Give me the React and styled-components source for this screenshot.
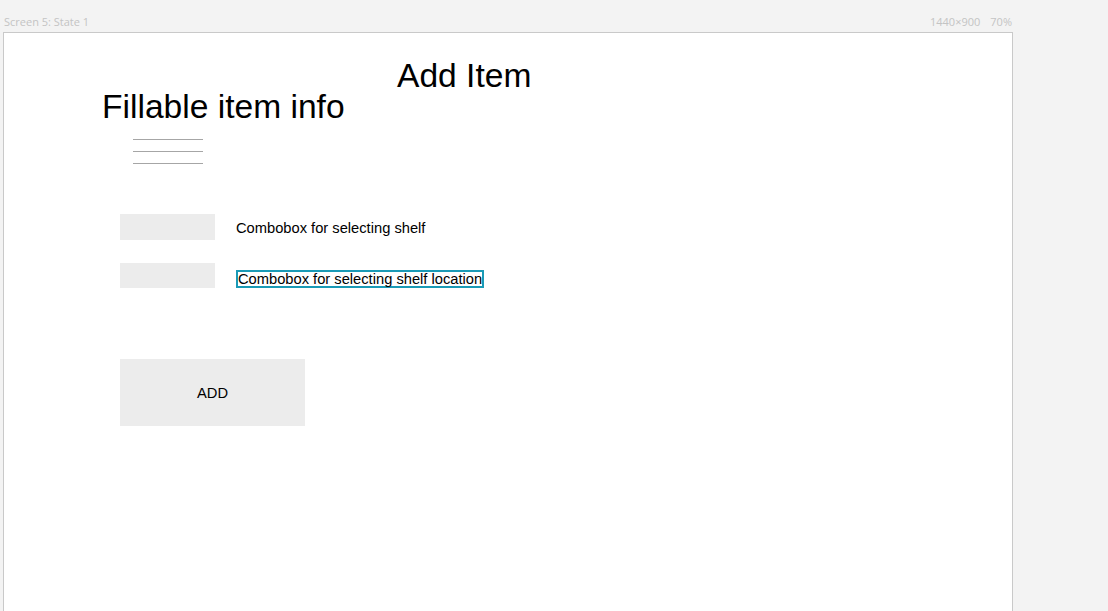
import React from 'react';
import styled, { createGlobalStyle } from 'styled-components';

const GlobalStyle = createGlobalStyle`
  html, body {
    margin: 0;
    padding: 0;
    background: #f3f3f3;
    overflow: hidden;
  }
  #root {
    height: 100vh;
  }
`;

const Page = styled.div`
  height: 100vh;
  display: flex;
  flex-direction: column;
`;

const TopBar = styled.div`
  width: 1010px;
  height: 32px;
  margin-left: 3px;
  box-sizing: border-box;
  padding: 15px 1px 0 1px;
  display: flex;
  justify-content: space-between;
  font-family: "Open Sans", "DejaVu Sans", sans-serif;
  font-size: 11px;
  line-height: 14px;
  color: #c4c4c4;
`;

const Meta = styled.div`
  display: flex;
  gap: 10px;
`;

const Canvas = styled.div`
  flex: 1;
  width: 1010px;
  margin-left: 3px;
  box-sizing: border-box;
  background: #ffffff;
  border: 1px solid #c9c9c9;
  border-bottom: none;
  padding-top: 27px;
  display: flex;
  flex-direction: column;
  font-family: "Liberation Sans", Arial, sans-serif;
  color: #000;
`;

const Heading = styled.h1`
  margin: 0;
  padding-left: ${(props) => props.indent}px;
  font-size: 33.6px;
  font-weight: 400;
  line-height: 31px;
`;

const Lines = styled.div`
  margin: 17px 0 0 129px;
  display: flex;
  flex-direction: column;
  gap: 11px;
`;

const Line = styled.div`
  width: 70px;
  height: 1px;
  background: #a6a6a6;
`;

const Rows = styled.div`
  margin: 50px 0 0 116px;
  display: flex;
  flex-direction: column;
  gap: 23px;
`;

const Row = styled.div`
  display: flex;
  align-items: flex-start;
  gap: 21px;
`;

const Field = styled.div`
  width: 95px;
  height: ${(props) => props.h}px;
  background: #ececec;
`;

const Label = styled.span`
  margin-top: ${(props) => props.offset}px;
  font-size: 14.7px;
  line-height: 17px;
`;

const SelectedLabel = styled.span`
  margin-top: 7px;
  display: inline-block;
  border: 2px solid #1a9ab6;
  padding: 1px 0 0 0;
  height: 13px;
  font-size: 14.7px;
  line-height: 13px;
  white-space: nowrap;
`;

const AddButton = styled.button`
  margin: 71px 0 0 116px;
  width: 185px;
  height: 67px;
  border: none;
  background: #ececec;
  font-family: "Liberation Sans", Arial, sans-serif;
  font-size: 14.7px;
  color: #000;
  padding: 0;
  cursor: pointer;
`;

const App = () => {
  return (
    <Page>
      <GlobalStyle />
      <TopBar>
        <span>Screen 5: State 1</span>
        <Meta>
          <span>1440×900</span>
          <span>70%</span>
        </Meta>
      </TopBar>
      <Canvas>
        <Heading indent={393}>Add Item</Heading>
        <Heading indent={98}>Fillable item info</Heading>
        <Lines>
          <Line />
          <Line />
          <Line />
        </Lines>
        <Rows>
          <Row>
            <Field h={26} />
            <Label offset={6}>Combobox for selecting shelf</Label>
          </Row>
          <Row>
            <Field h={25} />
            <SelectedLabel>Combobox for selecting shelf location</SelectedLabel>
          </Row>
        </Rows>
        <div>
          <AddButton>ADD</AddButton>
        </div>
      </Canvas>
    </Page>
  );
};

export default App;
